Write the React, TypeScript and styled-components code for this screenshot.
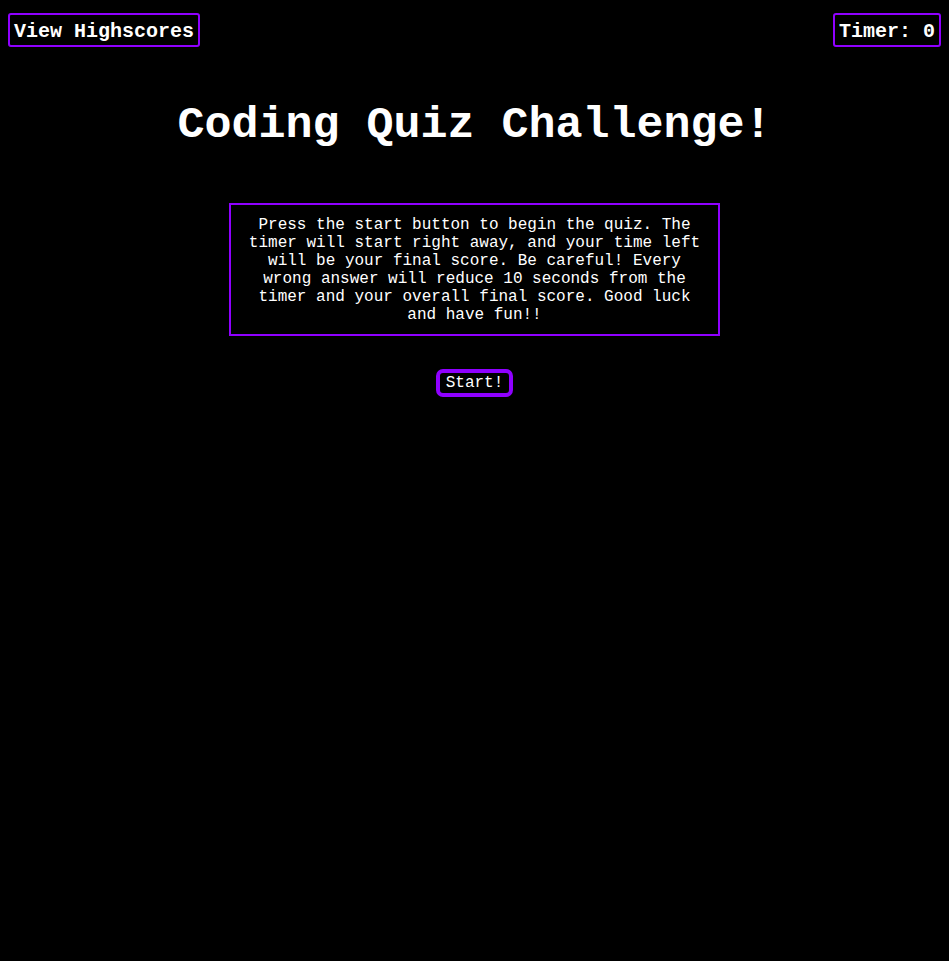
import React from "react";
import styled, { createGlobalStyle } from "styled-components";

const Global = createGlobalStyle`
  html, body { background: #000; }
  body { margin: 8px; color: #fff; font-family: "Liberation Mono", "Courier New", monospace; }
`;

const PURPLE = "#8f00ff";

const Header = styled.header`
  display: flex;
  justify-content: space-between;
  align-items: flex-start;
  margin-top: 5px;
`;

const HeaderBox = styled.div`
  border: 2px solid ${PURPLE};
  border-radius: 3px;
  padding: 6px 4px 2px;
  font-size: 20px;
  font-weight: bold;
  line-height: 22px;
  color: #fff;
`;

const Main = styled.main`
  display: flex;
  flex-direction: column;
  align-items: center;
`;

const Title = styled.h1`
  font-size: 45px;
  font-weight: bold;
  margin: 53px 0 51px;
  line-height: 52px;
`;

const Intro = styled.div`
  width: 457px;
  border: 2px solid ${PURPLE};
  padding: 11px 15px 10px;
  font-size: 16px;
  line-height: 18px;
  text-align: center;
`;

const StartButton = styled.button`
  margin-top: 33px;
  background: #000;
  color: #fff;
  border: 4px solid ${PURPLE};
  border-radius: 7px;
  font-family: "Liberation Mono", "Courier New", monospace;
  font-size: 16px;
  line-height: 18px;
  padding: 1px 6px 1px;
  cursor: pointer;
`;

export default function App() {
  return (
    <>
      <Global />
      <Header>
        <HeaderBox>View Highscores</HeaderBox>
        <HeaderBox>Timer: 0</HeaderBox>
      </Header>
      <Main>
        <Title>Coding Quiz Challenge!</Title>
        <Intro>
          Press the start button to begin the quiz. The timer will start right away, and your time left will be your final score. Be careful! Every wrong answer will reduce 10 seconds from the timer and your overall final score. Good luck and have fun!!
        </Intro>
        <StartButton>Start!</StartButton>
      </Main>
    </>
  );
}
